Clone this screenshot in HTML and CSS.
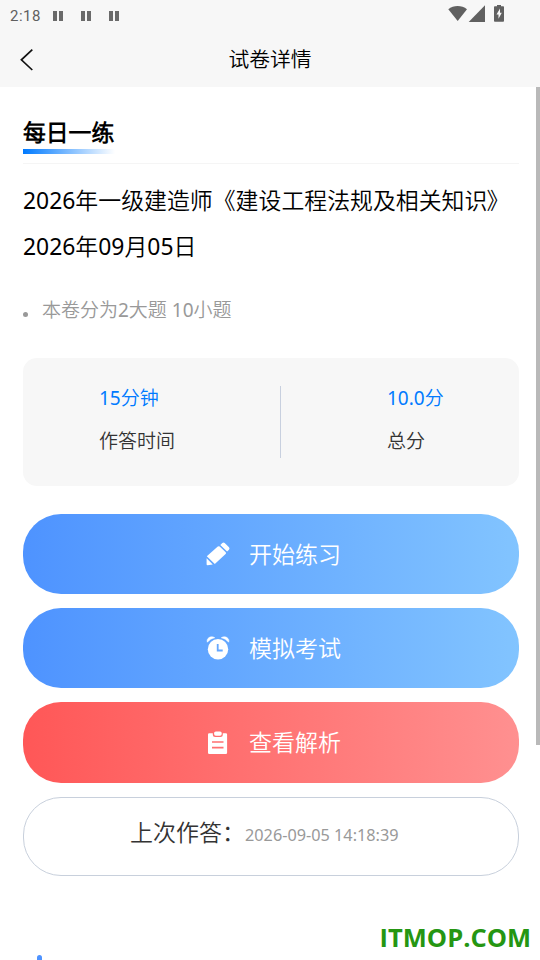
FILE: index.html
```html
<!DOCTYPE html>
<html lang="zh-CN">
<head>
<meta charset="utf-8">
<title>试卷详情</title>
<link rel="stylesheet" href="styles.css">
</head>
<body>
<div class="screen">
  <header class="top">
    <div class="status">
      <span class="time">2:18</span>
      <span class="pauses"><i></i><i></i><i></i></span>
      <svg class="signals" width="58" height="18" viewBox="0 0 58 18" fill="#606060">
        <path d="M.3 4.2C5.6-.1 13.7-.1 19 4.2L9.7 16z"/>
        <path d="M37 .2V17H20.7z"/>
        <path fill-rule="evenodd" d="M49 0h4v1.2h2.2q.8 0 .8.8v13.8q0 .9-.8.9h-8.400q-.8 0-.8-.9V2q0-.8.8-.8H49zM52 3.500l-3.500 6h2v4.200l3.300-6h-1.800z"/>
      </svg>
    </div>
    <div class="nav">
      <svg class="back" width="14" height="22" viewBox="0 0 14 22" fill="none" stroke="#111" stroke-width="1.700"><path d="M12.300.7 1.400 10.800 12.300 21"/></svg>
      <h1>试卷详情</h1>
    </div>
  </header>

  <main class="content">
    <div class="tab"><h2>每日一练</h2></div>
    <p class="paper">2026年一级建造师《建设工程法规及相关知识<span class="close">》</span>2026年09月05日</p>
    <p class="summary">本卷分为2大题 10小题</p>

    <section class="info">
      <div class="cell"><div><b>15分钟</b><span>作答时间</span></div></div>
      <div class="rule"></div>
      <div class="cell"><div><b>10.0分</b><span>总分</span></div></div>
    </section>

    <div class="actions">
      <a class="btn blue">
        <svg width="24" height="24" viewBox="0 0 24 24" fill="#fff">
          <path d="M11.800 4.600Q12.800 3.700 13.700 4.600L19.700 10.300Q20.500 11.200 19.600 12L8.800 21.900.8 14.200zM.6 16.300 6.800 22.400 1.600 23.300Q.5 23.400.6 22zM14.300 2.900 16.300 1Q17.500 0 18.700 1L23 5.300Q24 6.500 23 7.700L21.100 9.600z"/>
        </svg>
        <span>开始练习</span>
      </a>
      <a class="btn blue">
        <svg width="24" height="24" viewBox="0 0 24 24" fill="none">
          <circle cx="12" cy="13.300" r="10.200" fill="#fff"/>
          <path d="M1.400 6.200C0 2.400 4.700-.8 8.700 1.700 5.600 2.300 3.300 3.900 1.400 6.200zM22.600 6.200C24 2.400 19.300-.8 15.300 1.700c3.100.6 5.400 2.200 7.300 4.500z" fill="#fff" stroke="#fff" stroke-width=".6"/>
          <path d="M11.700 8v6.500h5" stroke="#65a7ff" stroke-width="1.800"/>
        </svg>
        <span>模拟考试</span>
      </a>
      <a class="btn red">
        <svg width="24" height="24" viewBox="0 0 24 24">
          <path fill="#fff" d="M3.200 2.300H6.800v1.200Q6.800 6 9.300 6h5Q16.800 6 16.800 3.500V2.300h3Q21.100 2.300 21.100 3.600v18.200Q21.100 23.100 19.800 23.100H3.300Q2 23.100 2 21.800v-18.200Q2 2.300 3.200 2.300z"/>
          <rect x="8.100" y=".4" width="7.600" height="4.300" rx="1.700" fill="#fff"/>
          <path d="M6 11h11.500M6 16.700h11.500" stroke="#ff7070" stroke-width="1.700"/>
        </svg>
        <span>查看解析</span>
      </a>
      <div class="last"><span>上次作答：</span><time>2026-09-05 14:18:39</time></div>
    </div>
    <div class="next"></div>
  </main>
  <div class="scrollbar"></div>
  <div class="mark">ITMOP.COM</div>
</div>
</body>
</html>
```
FILE: styles.css
```css
* { box-sizing: border-box; margin: 0; padding: 0; }

body {
  background: #fff;
  color: #000;
  font-family: "Noto Sans", "Noto Sans CJK SC DemiLight", "Noto Sans CJK SC Light", "Noto Sans CJK SC", sans-serif;
  overflow: hidden;
}

.screen { position: relative; height: 960px; overflow: hidden; }

.top { height: 87px; background: #f7f7f7; }

.status {
  display: flex;
  align-items: center;
  height: 32px;
  padding: 0 34px 0 10px;
  color: #606060;
}
.time { width: 43px; font: 15px/32px Roboto, sans-serif; letter-spacing: .5px; }
.pauses { display: flex; gap: 18px; }
.pauses i {
  width: 10px;
  height: 10px;
  border: solid #6a6a6a;
  border-width: 0 4px;
}
.signals { margin: -4px 0 0 auto; }

.nav { display: flex; align-items: center; height: 55px; padding-left: 20px; }
.nav h1 {
  flex: 1;
  padding-right: 34px;
  text-align: center;
  font-size: 20.8px;
  font-weight: 400;
  line-height: 52px;
  margin-top: -2px;
}

.content { width: 519px; padding-left: 23px; }

.tab { height: 77px; padding-top: 28px; border-bottom: 1px solid #f5f5f5; }
.tab h2 {
  width: 92px;
  height: 39px;
  font-size: 22.8px;
  font-weight: 700;
  line-height: 35px;
  background: linear-gradient(90deg, #007aff, #fff) 0 100% / 100% 5px no-repeat;
}

.paper { margin-top: 14px; font-size: 22.9px; line-height: 46px; word-break: break-all; }
.close { margin-left: -1px; }

.summary {
  display: flex;
  align-items: center;
  margin-top: 26px;
  height: 28px;
  font-size: 19px;
  line-height: 28px;
  color: #999;
}
.summary::before {
  content: "";
  width: 5px;
  height: 5px;
  margin: 8px 14px 0 0;
  border-radius: 50%;
  background: #999;
}

.info {
  display: flex;
  align-items: center;
  height: 128px;
  margin-top: 34px;
  border-radius: 14px;
  background: #f7f7f7;
  font-size: 19px;
}
.cell { flex: 1; padding-left: 76px; }
.cell + .rule + .cell { flex: 0 0 238px; padding-left: 106px; }
.cell b, .cell span { display: block; font-weight: 400; line-height: 43px; }
.cell div { margin-top: -5px; }
.cell b { color: #007aff; }
.cell span { color: #333; }
.rule { width: 1px; height: 72px; background: #c8d0df; }

.actions { display: flex; flex-direction: column; gap: 14px; margin-top: 28px; }
.btn {
  display: flex;
  align-items: center;
  height: 80px;
  padding-left: 183px;
  gap: 19px;
  border-radius: 38px;
  color: #fff;
  font-size: 23px;
}
.btn span { margin-top: -3px; }
.btn.blue { background: linear-gradient(90deg, #4e93ff, #82c4ff); }
.btn.red { height: 81px; background: linear-gradient(90deg, #ff5757, #ff9090); }

.last {
  height: 79px;
  padding-left: 106px;
  border: 1px solid #c8d0dc;
  border-radius: 38px;
  line-height: 68px;
  font-size: 23px;
  color: #333;
  white-space: nowrap;
}
.last time { font-size: 16.25px; color: #999; }

.next {
  width: 5px;
  height: 23px;
  margin: 79px 0 0 14px;
  border-radius: 3px;
  background: #4e93ff;
}

.scrollbar { position: absolute; top: 87px; right: 0; width: 4px; height: 658px; background: #b9b9b9; }

.mark {
  position: absolute;
  right: 9px;
  bottom: 5px;
  font-family: "Open Sans", "Noto Sans", sans-serif;
  font-size: 25.5px;
  font-weight: 700;
  line-height: 36px;
  color: #259612;
}
```
